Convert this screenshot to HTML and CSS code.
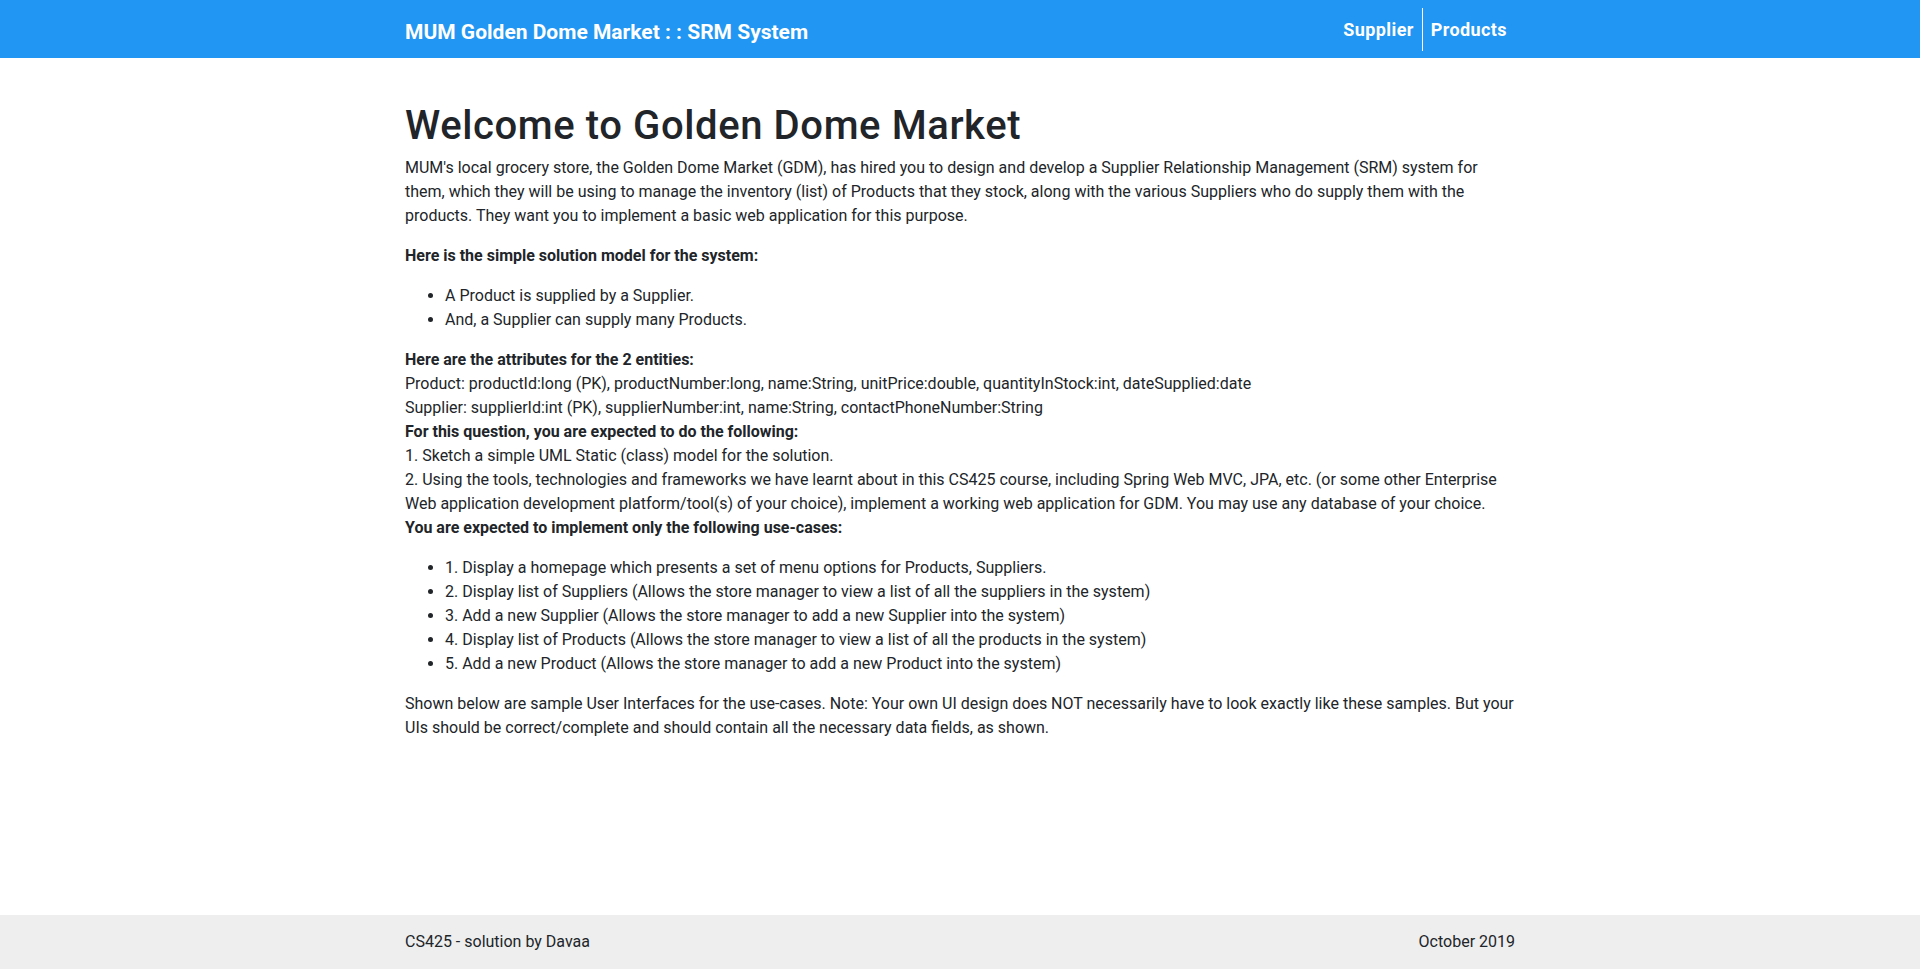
FILE: index.html
```html
<!DOCTYPE html>
<html lang="en">
<head>
<meta charset="utf-8">
<title>MUM Golden Dome Market : : SRM System</title>
<link rel="stylesheet" href="styles.css">
</head>
<body>
<nav class="navbar">
  <div class="container nav-inner">
    <a class="brand" href="#">MUM Golden Dome Market : : SRM System</a>
    <ul class="nav-links">
      <li><a class="nav-link" href="#">Supplier</a></li>
      <li><a class="nav-link nav-link-sep" href="#">Products</a></li>
    </ul>
  </div>
</nav>
<main class="container main">
  <h1 class="title">Welcome to Golden Dome Market</h1>
  <p class="para">MUM's local grocery store, the Golden Dome Market (GDM), has hired you to design and develop a Supplier Relationship Management (SRM) system for them, which they will be using to manage the inventory (list) of Products that they stock, along with the various Suppliers who do supply them with the products. They want you to implement a basic web application for this purpose.</p>
  <p class="para"><b>Here is the simple solution model for the system:</b></p>
  <ul class="list">
    <li>A Product is supplied by a Supplier.</li>
    <li>And, a Supplier can supply many Products.</li>
  </ul>
  <p class="para"><b>Here are the attributes for the 2 entities:</b><br>
  Product: productId:long (PK), productNumber:long, name:String, unitPrice:double, quantityInStock:int, dateSupplied:date<br>
  Supplier: supplierId:int (PK), supplierNumber:int, name:String, contactPhoneNumber:String<br>
  <b>For this question, you are expected to do the following:</b><br>
  1. Sketch a simple UML Static (class) model for the solution.<br>
  2. Using the tools, technologies and frameworks we have learnt about in this CS425 course, including Spring Web MVC, JPA, etc. (or some other Enterprise Web application development platform/tool(s) of your choice), implement a working web application for GDM. You may use any database of your choice.<br>
  <b>You are expected to implement only the following use-cases:</b></p>
  <ul class="list">
    <li>1. Display a homepage which presents a set of menu options for Products, Suppliers.</li>
    <li>2. Display list of Suppliers (Allows the store manager to view a list of all the suppliers in the system)</li>
    <li>3. Add a new Supplier (Allows the store manager to add a new Supplier into the system)</li>
    <li>4. Display list of Products (Allows the store manager to view a list of all the products in the system)</li>
    <li>5. Add a new Product (Allows the store manager to add a new Product into the system)</li>
  </ul>
  <p class="para">Shown below are sample User Interfaces for the use-cases. Note: Your own UI design does NOT necessarily have to look exactly like these samples. But your UIs should be correct/complete and should contain all the necessary data fields, as shown.</p>
</main>
<footer class="footer">
  <div class="container footer-inner">
    <span>CS425 - solution by Davaa</span>
    <span>October 2019</span>
  </div>
</footer>
</body>
</html>
```

FILE: styles.css
```css
html, body {
  margin: 0;
  padding: 0;
}
body {
  font-family: Roboto, "Noto Sans", "Liberation Sans", sans-serif;
  font-size: 16px;
  line-height: 1.5;
  color: #212529;
  background: #fff;
  min-height: 100vh;
  display: flex;
  flex-direction: column;
}
.container {
  width: 1110px;
  margin: 0 auto;
  box-sizing: border-box;
}
.navbar {
  background: #2196f3;
  padding: 8px 0 7px;
}
.nav-inner {
  display: flex;
  align-items: center;
  justify-content: space-between;
}
.brand {
  color: #fff;
  text-decoration: none;
  font-size: 21px;
  font-weight: 700;
  line-height: 30px;
  padding-top: 5px;
}
.nav-links {
  display: flex;
  list-style: none;
  margin: 0;
  padding: 0;
}
.nav-link {
  display: block;
  color: #fff;
  text-decoration: none;
  font-size: 18px;
  font-weight: 700;
  line-height: 27px;
  letter-spacing: 0.4px;
  padding: 8px 8px;
}
.nav-link-sep {
  border-left: 1px solid #fff;
}
.main {
  flex: 1;
  padding-top: 44px;
}
.title {
  font-size: 40px;
  font-weight: 500;
  line-height: 1.2;
  letter-spacing: 0.6px;
  margin: 0 0 6px;
}
.para {
  margin: 0 0 16px;
}
.list {
  margin: 0 0 16px;
  padding-left: 40px;
}
.footer {
  background: #eeeeee;
  padding: 15px 0;
}
.footer-inner {
  display: flex;
  justify-content: space-between;
}
```
